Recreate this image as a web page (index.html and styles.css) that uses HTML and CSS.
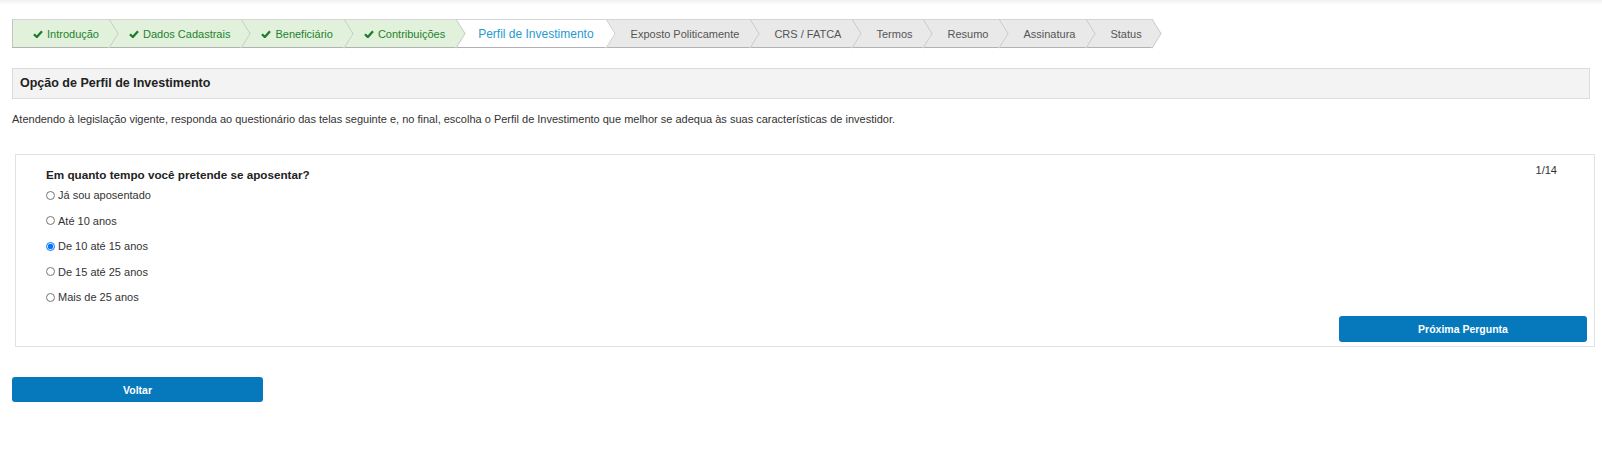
FILE: index.html
```html
<!DOCTYPE html>
<html lang="pt-BR">
<head>
  <meta charset="UTF-8">
  <meta name="viewport" content="width=device-width, initial-scale=1.0">
  <title>Perfil de Investimento</title>
  <link rel="stylesheet" href="styles.css">
</head>
<body>
  <div class="topbar"></div>

  <div class="page">
    <ul class="steps">
      <li class="done"><svg class="chk" viewBox="0 0 10 8"><path d="M1 4.2 L3.8 7 L9 1.3"/></svg>Introdução</li>
      <li class="done"><svg class="chk" viewBox="0 0 10 8"><path d="M1 4.2 L3.8 7 L9 1.3"/></svg>Dados Cadastrais</li>
      <li class="done"><svg class="chk" viewBox="0 0 10 8"><path d="M1 4.2 L3.8 7 L9 1.3"/></svg>Beneficiário</li>
      <li class="done"><svg class="chk" viewBox="0 0 10 8"><path d="M1 4.2 L3.8 7 L9 1.3"/></svg>Contribuições</li>
      <li class="active">Perfil de Investimento</li>
      <li>Exposto Politicamente</li>
      <li>CRS / FATCA</li>
      <li>Termos</li>
      <li>Resumo</li>
      <li>Assinatura</li>
      <li>Status</li>
    </ul>

    <div class="panel-title">Opção de Perfil de Investimento</div>

    <p class="intro">Atendendo à legislação vigente, responda ao questionário das telas seguinte e, no final, escolha o Perfil de Investimento que melhor se adequa às suas características de investidor.</p>

    <div class="question">
      <div class="q-head">
        <div class="q-title">Em quanto tempo você pretende se aposentar?</div>
        <div class="q-count">1/14</div>
      </div>
      <div class="options">
        <label><input type="radio" name="tempo">Já sou aposentado</label>
        <label><input type="radio" name="tempo">Até 10 anos</label>
        <label><input type="radio" name="tempo" checked>De 10 até 15 anos</label>
        <label><input type="radio" name="tempo">De 15 até 25 anos</label>
        <label><input type="radio" name="tempo">Mais de 25 anos</label>
      </div>
      <div class="q-foot">
        <button class="btn btn-next">Próxima Pergunta</button>
      </div>
    </div>

    <button class="btn btn-back">Voltar</button>
  </div>
</body>
</html>
```

FILE: styles.css
```css
body {
  margin: 0;
  font-family: "Liberation Sans", Arial, sans-serif;
  font-size: 11px;
  color: #333;
  background: #fff;
}

.topbar {
  height: 5px;
  background: linear-gradient(to bottom, #f1f1f1, #fff);
}

.page {
  padding: 14px 0 0 12px;
}

/* Wizard steps */
.steps {
  list-style: none;
  margin: 0;
  padding: 0;
  display: flex;
  height: 29px;
}

.steps li {
  position: relative;
  display: flex;
  align-items: center;
  padding: 0 11px 0 24px;
  background: #e9e9e9;
  color: #555;
  border-top: 1px solid #d4d4d4;
  border-bottom: 1px solid #b2b2b2;
  box-sizing: border-box;
  white-space: nowrap;
}

.steps li::after {
  content: "";
  position: absolute;
  top: 3.25px;
  right: -10.25px;
  width: 20.5px;
  height: 20.5px;
  box-sizing: border-box;
  background: inherit;
  border-top: 1px solid #c6c6c6;
  border-right: 1px solid #c6c6c6;
  transform: scaleX(0.62) rotate(45deg);
  z-index: 1;
}

.steps li.done {
  padding: 0 11px 0 20px;
  background: #e2f1db;
  color: #1d8230;
}

.steps li.done:first-child {
  padding-right: 10px;
  border-left: 1px solid #c4c4c4;
}

.steps li.active {
  padding: 0 13px 0 22px;
  background: #fff;
  color: #1f9bd0;
  font-size: 12px;
}

.chk {
  width: 10px;
  height: 8px;
  margin-right: 4px;
  fill: none;
  stroke: #1f7a2e;
  stroke-width: 2.3;
}

/* Section header */
.panel-title {
  margin: 20px 12px 0 0;
  height: 29px;
  line-height: 29px;
  padding-left: 7px;
  background: #f3f3f3;
  border: 1px solid #dcdcdc;
  font-size: 12.5px;
  font-weight: bold;
  color: #222;
}

.intro {
  margin: 14px 0 0;
  line-height: 13px;
  color: #333;
}

/* Question card */
.question {
  margin: 28px 7px 0 3px;
  border: 1px solid #e2e2e2;
  padding: 8.5px 7px 4px 30px;
}

.q-head {
  display: flex;
  justify-content: space-between;
  align-items: flex-start;
}

.q-title {
  margin-top: 3px;
  font-size: 11.7px;
  font-weight: bold;
  line-height: 15px;
  color: #222;
}

.q-count {
  margin-right: 30px;
  line-height: 13px;
  color: #333;
}

.options {
  display: flex;
  flex-direction: column;
  gap: 12.5px;
  margin-top: 7px;
}

.options label {
  display: flex;
  align-items: center;
  height: 13px;
  color: #333;
}

.options input {
  width: 9px;
  height: 9px;
  margin: 0 3px 0 0;
}

.q-foot {
  display: flex;
  justify-content: flex-end;
  margin-top: 12.5px;
}

.btn {
  border: none;
  border-radius: 3px;
  background: #0679bc;
  color: #fff;
  font-family: "Liberation Sans", Arial, sans-serif;
  font-size: 10.5px;
  font-weight: bold;
  cursor: pointer;
}

.btn-next {
  width: 248px;
  height: 26px;
}

.btn-back {
  display: block;
  width: 251px;
  height: 25px;
  margin: 30px 0 0;
}
```
